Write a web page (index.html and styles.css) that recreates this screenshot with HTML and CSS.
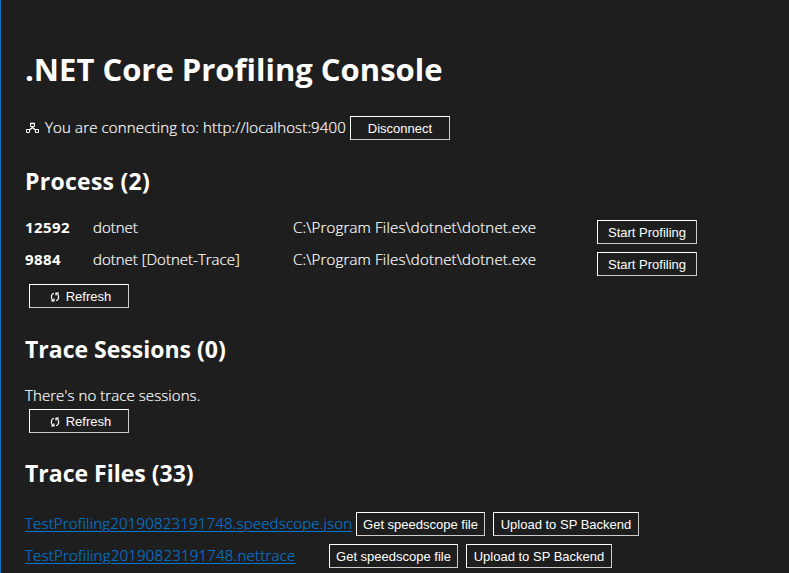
FILE: index.html
```html
<!DOCTYPE html>
<html lang="en">
<head>
<meta charset="utf-8">
<title>.NET Core Profiling Console</title>
<link rel="stylesheet" href="styles.css">
</head>
<body>
<svg width="0" height="0" class="defs">
  <symbol id="refresh" viewBox="0 0 10 10"><path d="M4 1.500H3L1.500 3.500v3L3 8.500M1 9h3V6.500M6 8.500h1l1.500-2v-3L7 1.500M9 1H6v2.500" fill="none" stroke="currentColor" stroke-width="1.200"/></symbol>
</svg>
<main>
  <h1>.NET Core Profiling Console</h1>
  <div class="connection">
    <svg class="network" viewBox="0 0 15 12"><path d="M5.500 1.500h4v3h-4zM1.500 7.500h3v3h-3zM10.500 7.500h3v3h-3z" fill="none" stroke="currentColor"/><path d="M5 1.500h5M7.500 4v2M4.500 8l3-2.500 3 2.500" fill="none" stroke="currentColor" stroke-width="1.500"/></svg>
    <span class="status">You are connecting to: http://localhost:9400</span>
    <button>Disconnect</button>
  </div>
  <h2 class="h-process">Process (2)</h2>
  <div class="process"><b>12592</b><span>dotnet</span><span class="path">C:\Program Files\dotnet\dotnet.exe</span><button>Start Profiling</button></div>
  <div class="process"><b>9884</b><span>dotnet [Dotnet-Trace]</span><span class="path">C:\Program Files\dotnet\dotnet.exe</span><button>Start Profiling</button></div>
  <button class="refresh"><svg><use href="#refresh"/></svg>Refresh</button>
  <h2 class="h-sessions">Trace Sessions (0)</h2>
  <p>There's no trace sessions.</p>
  <button class="refresh"><svg><use href="#refresh"/></svg>Refresh</button>
  <h2 class="h-files">Trace Files (33)</h2>
  <div class="file"><a class="json" href="#">TestProfiling20190823191748.speedscope.json</a><button class="get">Get speedscope file</button><button class="upload">Upload to SP Backend</button></div>
  <div class="file"><a class="nettrace" href="#">TestProfiling20190823191748.nettrace</a><button class="get">Get speedscope file</button><button class="upload">Upload to SP Backend</button></div>
</main>
</body>
</html>
```
FILE: styles.css
```css
* { box-sizing: border-box; }
body { margin: 0; height: 573px; overflow: hidden; background: #1e1e1e; color: #fff; font: 300 15px/24px "Open Sans", "Noto Sans", sans-serif; }
main { height: 573px; padding: 48px 0 0 24px; border-left: 1px solid #0e70c0; overflow: hidden; white-space: nowrap; }
.defs { display: block; }
h1, h2, p { margin: 0; }
h1 { height: 68px; font-size: 31px; line-height: 42px; font-weight: 700; }
h2 { font-size: 23px; line-height: 30px; font-weight: 700; }
.connection { display: flex; height: 24px; }
.network { width: 15px; height: 12px; margin: 6px 5px 0 0; }
.status { width: 305px; line-height: 22px; letter-spacing: .15px; }
.status, .process span, p, .file a { -webkit-text-stroke: .2px currentColor; }
button { display: flex; align-items: center; justify-content: center; width: 100px; height: 24px; padding: 1px 0 0; border: 1px solid #fff; border-right-color: #ccc; border-bottom-color: #ccc; border-radius: 0; background: transparent; color: #fff; font: 13px/22px "Liberation Sans", Arial, sans-serif; }
.h-process { margin-top: 26px; height: 50px; letter-spacing: .27px; }
.process { display: grid; grid-template-columns: 68px 200px 304px 100px; height: 32px; }
.process > :not(button) { line-height: 22px; }
.process button { margin-top: 4px; }
.process b { font-weight: 700; letter-spacing: .4px; }
.path { letter-spacing: .18px; }
.refresh { margin-left: 4px; padding-left: 3px; }
.refresh svg { width: 10px; height: 10px; margin-right: 6px; }
.process + .refresh { margin-top: 4px; }
.h-sessions { margin-top: 26px; height: 50px; }
p { height: 25px; line-height: 22px; letter-spacing: .08px; }
.h-files { margin-top: 25px; height: 54px; }
.file { display: flex; height: 32px; }
.file a { color: #0078d4; line-height: 22px; text-decoration: underline; text-decoration-thickness: 1px; text-underline-offset: 2px; }
.json { width: 331px; letter-spacing: .185px; }
.nettrace { width: 304px; letter-spacing: .22px; }
.get { width: 129px; margin-right: 8px; }
.upload { width: 146px; }
```
